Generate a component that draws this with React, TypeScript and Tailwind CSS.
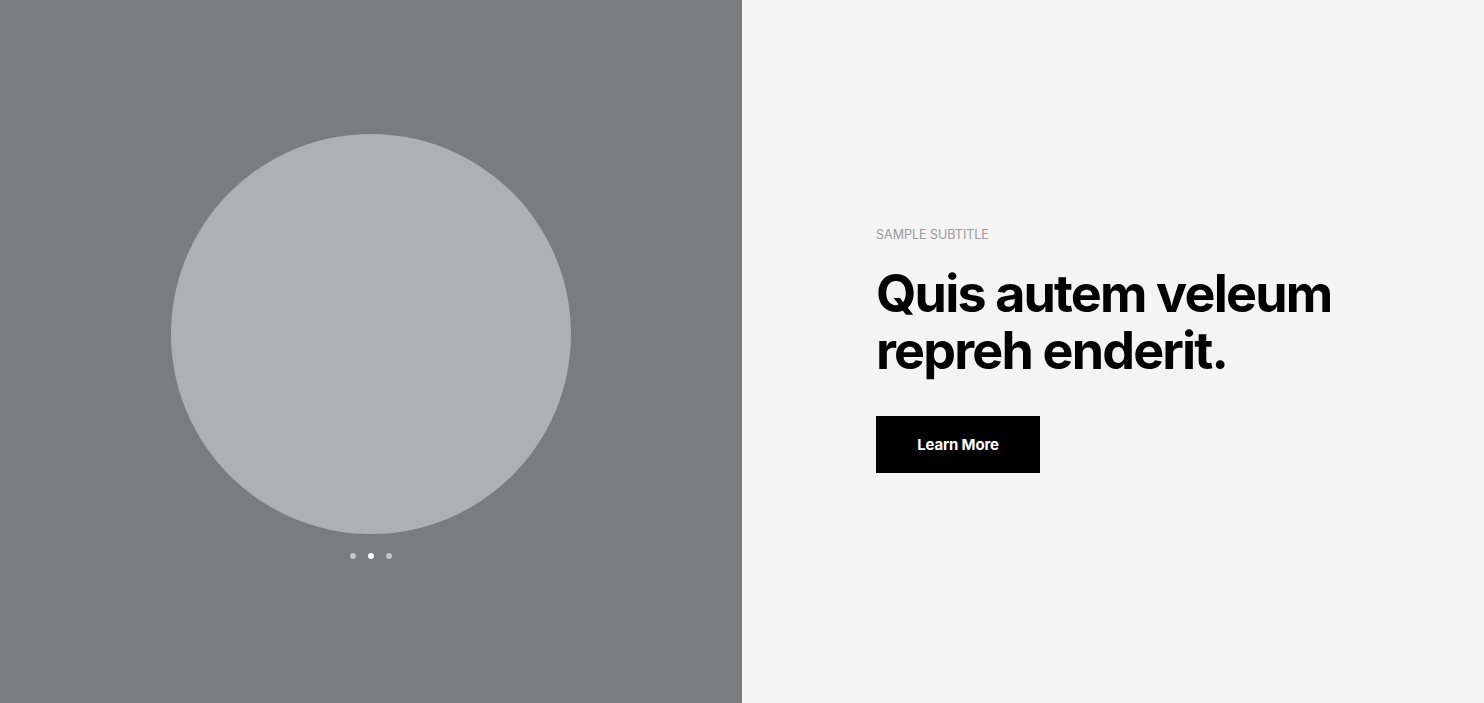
export default function App() {
  return (
    <div className="flex h-[703px] w-full" style={{ fontFamily: "Inter, 'Noto Sans', sans-serif" }}>
      <div className="flex w-[742px] shrink-0 flex-col items-center justify-center bg-[#7b7c7e] pb-[10px]">
        <div className="h-[400px] w-[400px] rounded-full bg-[#afb0b2]" />
        <div className="mt-[19px] flex items-center gap-[12px]">
          <span className="h-[6px] w-[6px] rounded-full bg-[#c4c5c6]" />
          <span className="h-[6px] w-[6px] rounded-full bg-white" />
          <span className="h-[6px] w-[6px] rounded-full bg-[#c4c5c6]" />
        </div>
      </div>
      <div className="flex flex-1 flex-col justify-center bg-[#f4f4f4] pb-[4px] pl-[134px]">
        <div className="text-[12.5px] uppercase leading-[16px] text-[#9a9b9d]">Sample subtitle</div>
        <h1 className="mt-[22px] text-[52px] font-bold leading-[57px] tracking-[-0.035em] text-black">
          Quis autem veleum
          <br />
          repreh enderit.
        </h1>
        <button className="mt-[37px] flex h-[57px] w-[164px] items-center justify-center bg-black pt-[2px] text-[15px] font-bold tracking-[-0.01em] text-white">
          Learn More
        </button>
      </div>
    </div>
  );
}
